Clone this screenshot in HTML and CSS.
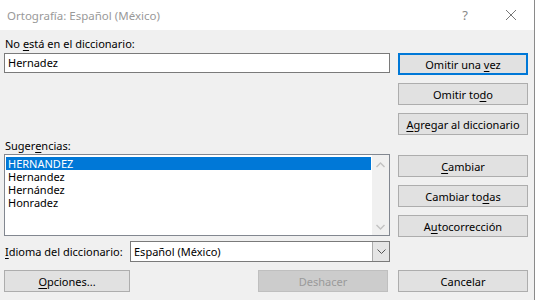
FILE: index.html
```html
<!DOCTYPE html>
<html lang="es">
<head>
    <meta charset="UTF-8">
    <title>Ortografía: Español (México)</title>
    <link rel="stylesheet" href="styles.css">
</head>
<body>
    <div class="dialog">
        <div class="titlebar">
            <span class="title">Ortografía: Español (México)</span>
            <span class="help">?</span>
            <svg class="close" width="12" height="12" viewBox="0 0 12 12">
                <path d="M1 1L11 11M11 1L1 11" stroke="#777" stroke-width="1" fill="none"/>
            </svg>
        </div>

        <div class="main">
            <div class="left">
                <div class="field-label first">No <u>e</u>stá en el diccionario:</div>
                <div class="textbox">Hernadez</div>

                <div class="field-label second">Suger<u>e</u>ncias:</div>
                <div class="listbox">
                    <ul class="items">
                        <li class="selected">HERNANDEZ</li>
                        <li>Hernandez</li>
                        <li>Hernández</li>
                        <li>Honradez</li>
                    </ul>
                    <div class="scrollbar">
                        <svg width="9" height="6" viewBox="0 0 9 6"><path d="M0.5 5L4.5 1L8.5 5" stroke="#c2c2c2" stroke-width="1.4" fill="none"/></svg>
                        <svg width="9" height="6" viewBox="0 0 9 6"><path d="M0.5 1L4.5 5L8.5 1" stroke="#c2c2c2" stroke-width="1.4" fill="none"/></svg>
                    </div>
                </div>

                <div class="lang-row">
                    <span class="lang-label"><u>I</u>dioma del diccionario:</span>
                    <div class="combo">
                        <span class="combo-value">Español (México)</span>
                        <span class="combo-btn">
                            <svg width="9" height="5" viewBox="0 0 9 5"><path d="M0.5 0.5L4.5 4.5L8.5 0.5" stroke="#555" stroke-width="1" fill="none"/></svg>
                        </span>
                    </div>
                </div>
            </div>

            <div class="right">
                <div class="btn-group">
                    <button class="btn default">Omitir una <u>v</u>ez</button>
                    <button class="btn">Omitir to<u>d</u>o</button>
                    <button class="btn"><u>A</u>gregar al diccionario</button>
                </div>
                <div class="btn-group second">
                    <button class="btn"><u>C</u>ambiar</button>
                    <button class="btn">Cambiar to<u>d</u>as</button>
                    <button class="btn">A<u>u</u>tocorrección</button>
                </div>
            </div>
        </div>

        <div class="footer">
            <button class="btn options"><u>O</u>pciones...</button>
            <button class="btn disabled">Deshacer</button>
            <button class="btn">Cancelar</button>
        </div>
    </div>
</body>
</html>
```

FILE: styles.css
```css
html, body {
    margin: 0;
    padding: 0;
    background: #ffffff;
}
body {
    font-family: "Noto Sans", "Open Sans", sans-serif;
    font-size: 11px;
    color: #000;
}
u {
    text-decoration: underline;
    text-underline-offset: 2px;
}
.dialog {
    width: 534px;
    height: 300px;
    background: #f0f0f0;
    border-right: 1px solid #8a8a8a;
}
.titlebar {
    height: 30px;
    background: #fff;
    display: flex;
    align-items: center;
    padding-left: 7px;
    color: #999;
}
.title {
    font-size: 11.5px;
    flex: 1;
}
.help {
    font-size: 13px;
    color: #888;
    margin-right: 37px;
}
.close {
    margin-right: 17px;
}

.main {
    display: flex;
    gap: 8px;
    padding-left: 4px;
}
.left {
    width: 386px;
    display: flex;
    flex-direction: column;
}
.field-label {
    height: 16px;
    line-height: 16px;
    padding-left: 1px;
}
.field-label.first {
    margin-top: 6px;
    margin-bottom: 1px;
}
.field-label.second {
    margin-top: 65px;
    margin-bottom: 0;
}
.textbox {
    height: 18px;
    line-height: 18px;
    background: #fff;
    border: 1px solid #7a7a7a;
    padding-left: 3px;
}
.listbox {
    height: 80px;
    background: #fff;
    border: 1px solid #828790;
    display: flex;
}
.items {
    list-style: none;
    margin: 0;
    padding: 2px 1px;
    flex: 1;
}
.items li {
    height: 13px;
    line-height: 13px;
    padding-left: 2px;
}
.items li.selected {
    background: #0078d7;
    color: #fff;
}
.scrollbar {
    width: 17px;
    background: #f0f0f0;
    display: flex;
    flex-direction: column;
    justify-content: space-between;
    align-items: center;
    padding: 7px 0 5px;
}
.lang-row {
    margin-top: 5px;
    height: 21px;
    display: flex;
    align-items: center;
}
.lang-label {
    width: 125px;
    padding-left: 1px;
    white-space: nowrap;
}
.combo {
    flex: 1;
    height: 19px;
    background: #fff;
    border: 1px solid #7a7a7a;
    display: flex;
    align-items: center;
}
.combo-value {
    flex: 1;
    padding-left: 3px;
}
.combo-btn {
    width: 16px;
    height: 19px;
    border-left: 1px solid #ababab;
    background: #e5e5e5;
    display: flex;
    align-items: center;
    justify-content: center;
}

.right {
    width: 130px;
    padding-top: 23px;
}
.btn-group {
    display: flex;
    flex-direction: column;
    gap: 8px;
}
.btn-group.second {
    margin-top: 20px;
}
.btn {
    height: 22px;
    width: 130px;
    padding: 0;
    background: #e1e1e1;
    border: 1px solid #adadad;
    font-family: inherit;
    font-size: 11px;
    color: #000;
}
.btn.default {
    border: 2px solid #0078d7;
}
.btn.disabled {
    background: #cccccc;
    border-color: #bfbfbf;
    color: #9a9a9a;
}

.footer {
    width: 524px;
    margin-top: 8px;
    padding-left: 4px;
    display: flex;
    gap: 10px;
}
.btn.options {
    width: 126px;
    margin-right: auto;
}
```
